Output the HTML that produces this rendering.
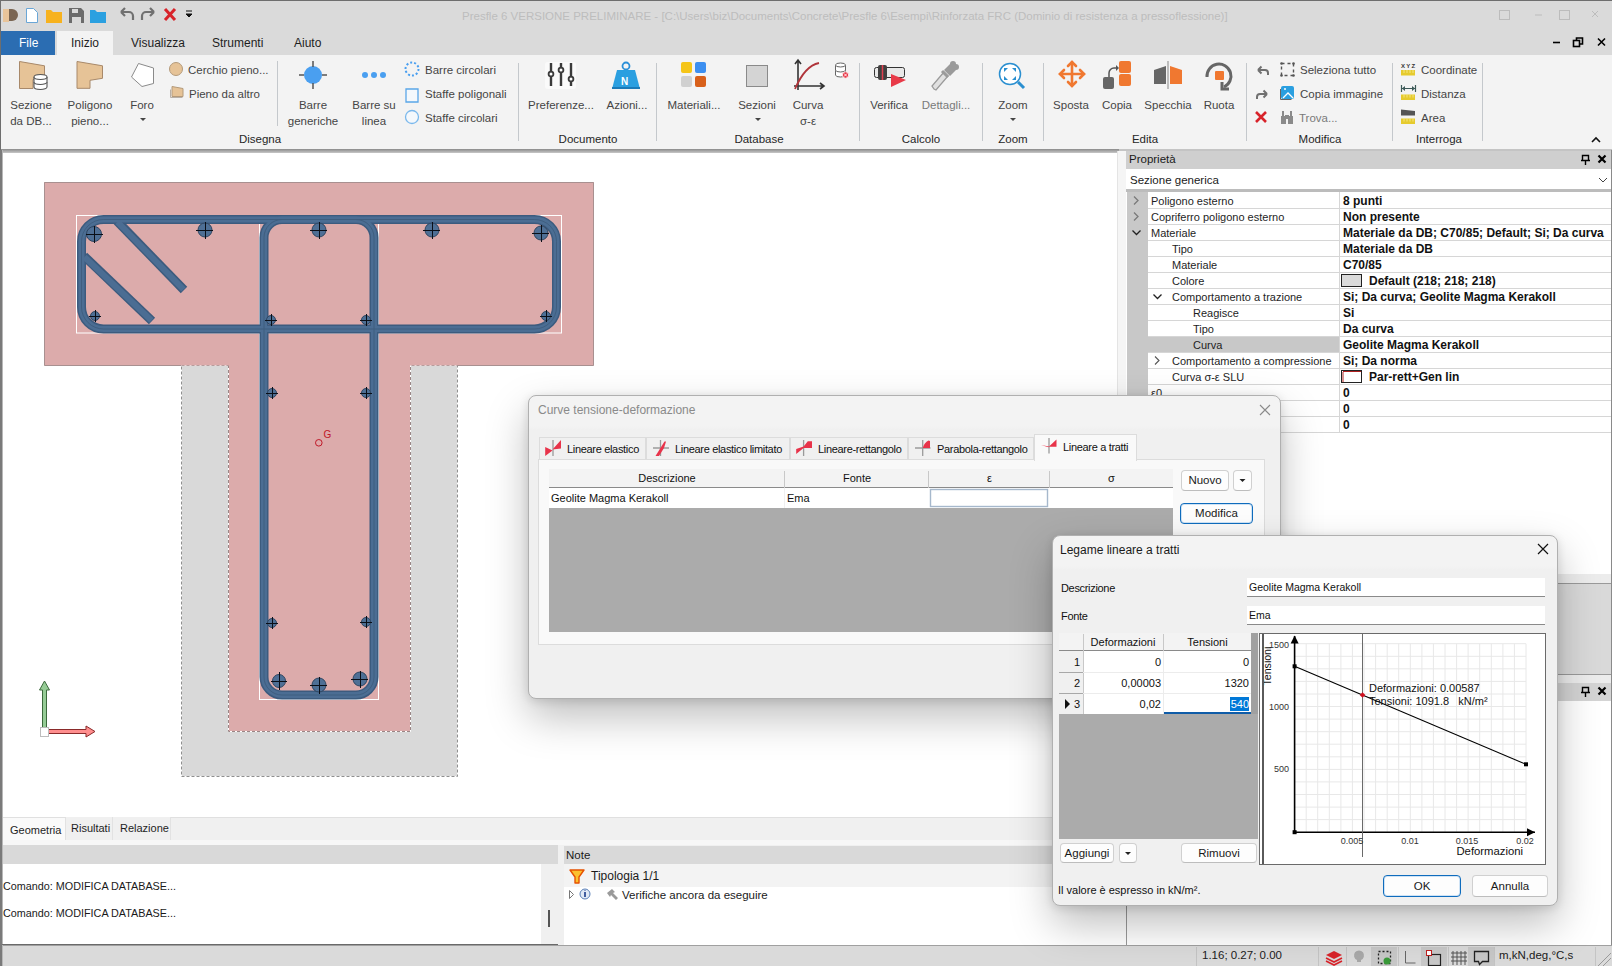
<!DOCTYPE html>
<html><head><meta charset="utf-8">
<style>
*{box-sizing:border-box}
html,body{margin:0;padding:0}
body{width:1612px;height:966px;position:relative;overflow:hidden;background:#dadada;font-family:"Liberation Sans",sans-serif;font-size:11px;color:#1e1e1e}
.a{position:absolute}
.t{position:absolute;white-space:nowrap;line-height:14px}
.b{font-weight:bold}
svg{position:absolute;overflow:visible}
</style></head><body>

<!-- ============ TITLE BAR ============ -->
<div class="a" style="left:0;top:0;width:1612px;height:31px;background:#dadada;border-top:1px solid #6e6e6e;border-left:1px solid #6e6e6e"></div>
<div class="t" style="left:462px;top:9px;color:#bdbdbd;font-size:11.5px">Presfle 6 VERSIONE PRELIMINARE - [C:\Users\biz\Documents\Concrete\Presfle 6\Esempi\Rinforzata FRC (Dominio di resistenza a pressoflessione)]</div>

<!-- ============ TAB STRIP ============ -->
<div class="a" style="left:1px;top:31px;width:54px;height:24px;background:#2b6db2"></div>
<div class="t" style="left:19px;top:36px;color:#fff;font-size:12px">File</div>
<div class="a" style="left:57px;top:31px;width:56px;height:24px;background:#f3f3f3"></div>
<div class="t" style="left:71px;top:36px;font-size:12px">Inizio</div>
<div class="t" style="left:131px;top:36px;font-size:12px">Visualizza</div>
<div class="t" style="left:212px;top:36px;font-size:12px">Strumenti</div>
<div class="t" style="left:294px;top:36px;font-size:12px">Aiuto</div>

<!-- ============ RIBBON BODY ============ -->
<div class="a" style="left:1px;top:55px;width:1611px;height:94px;background:#f3f3f3"></div>
<div class="a" style="left:0;top:149px;width:1612px;height:2px;background:#c4c4c4"></div>
<div class="a" style="left:0;top:149px;width:1119px;height:4px;background:linear-gradient(#8a8a8a,#a8a8a8 50%,#c8c8c8)"></div>
<style>
.lb{position:absolute;width:100px;text-align:center;white-space:nowrap;line-height:16px;color:#454545;font-size:11.5px}
.gl{position:absolute;width:120px;text-align:center;white-space:nowrap;line-height:14px;color:#262626;font-size:11.5px}
.sm{position:absolute;white-space:nowrap;line-height:14px;color:#454545;font-size:11.5px}
.sep{position:absolute;top:63px;width:1px;height:78px;background:#c4c8cc}
</style>
<!-- large button labels (top = baseline-12) -->
<div class="lb" style="left:-19px;top:97px">Sezione<br>da DB...</div>
<div class="lb" style="left:40px;top:97px">Poligono<br>pieno...</div>
<div class="lb" style="left:92px;top:97px">Foro</div>
<div class="lb" style="left:263px;top:97px">Barre<br>generiche</div>
<div class="lb" style="left:324px;top:97px">Barre su<br>linea</div>
<div class="lb" style="left:511px;top:97px">Preferenze...</div>
<div class="lb" style="left:577px;top:97px">Azioni...</div>
<div class="lb" style="left:644px;top:97px">Materiali...</div>
<div class="lb" style="left:707px;top:97px">Sezioni</div>
<div class="lb" style="left:758px;top:97px">Curva<br>σ-ε</div>
<div class="lb" style="left:839px;top:97px">Verifica</div>
<div class="lb" style="left:896px;top:97px;color:#7a7a7a">Dettagli...</div>
<div class="lb" style="left:963px;top:97px">Zoom</div>
<div class="lb" style="left:1021px;top:97px">Sposta</div>
<div class="lb" style="left:1067px;top:97px">Copia</div>
<div class="lb" style="left:1118px;top:97px">Specchia</div>
<div class="lb" style="left:1169px;top:97px">Ruota</div>
<!-- small buttons -->
<div class="sm" style="left:188px;top:63px">Cerchio pieno...</div>
<div class="sm" style="left:189px;top:87px">Pieno da altro</div>
<div class="sm" style="left:425px;top:63px">Barre circolari</div>
<div class="sm" style="left:425px;top:87px">Staffe poligonali</div>
<div class="sm" style="left:425px;top:111px">Staffe circolari</div>
<div class="sm" style="left:1300px;top:63px">Seleziona tutto</div>
<div class="sm" style="left:1300px;top:87px">Copia immagine</div>
<div class="sm" style="left:1299px;top:111px;color:#7a7a7a">Trova...</div>
<div class="sm" style="left:1421px;top:63px">Coordinate</div>
<div class="sm" style="left:1421px;top:87px">Distanza</div>
<div class="sm" style="left:1421px;top:111px">Area</div>
<!-- group labels -->
<div class="gl" style="left:200px;top:132px">Disegna</div>
<div class="gl" style="left:528px;top:132px">Documento</div>
<div class="gl" style="left:699px;top:132px">Database</div>
<div class="gl" style="left:861px;top:132px">Calcolo</div>
<div class="gl" style="left:953px;top:132px">Zoom</div>
<div class="gl" style="left:1085px;top:132px">Edita</div>
<div class="gl" style="left:1260px;top:132px">Modifica</div>
<div class="gl" style="left:1379px;top:132px">Interroga</div>
<!-- separators -->
<div class="sep" style="left:277px;top:61px;height:65px"></div>
<div class="sep" style="left:518px"></div>
<div class="sep" style="left:656px"></div>
<div class="sep" style="left:859px"></div>
<div class="sep" style="left:982px"></div>
<div class="sep" style="left:1043px"></div>
<div class="sep" style="left:1246px"></div>
<div class="sep" style="left:1392px"></div>
<div class="sep" style="left:1482px"></div>

<!-- ribbon icons -->
<svg width="1612" height="150" style="left:0;top:0">
 <!-- QAT -->
 <path d="M3 9h6v13h-6z" fill="#e8c49a"/><path d="M9 9h3a6 6 0 0 1 0 12h-3z" fill="#7a6552"/>
 <path d="M26.5 8.5h7l4 4v10h-11z" fill="#fff" stroke="#6aa6d6"/>
 <path d="M46 10h5l2 2h9v11h-16z" fill="#f7b21e"/>
 <path d="M69 8h12l3 3v12h-3v-6h-9v6h-3z" fill="#6b6b6b"/><rect x="72" y="9" width="6" height="4" fill="#dadada"/>
 <path d="M90 10h5l2 2h9v11h-16z" fill="#2ba0e0"/>
 <path d="M121 12l4-4M121 12l4 4M121 12h8a4 4 0 0 1 4 4v4" fill="none" stroke="#707070" stroke-width="2.2"/>
 <path d="M154 12l-4-4M154 12l-4 4M154 12h-8a4 4 0 0 0-4 4v4" fill="none" stroke="#707070" stroke-width="2.2"/>
 <path d="M165 9l10 11M175 9l-10 11" stroke="#d8232a" stroke-width="3"/>
 <path d="M186 11h6M186 14h6l-3 3z" fill="#111" stroke="#111" stroke-width="1"/>
 <!-- window controls title -->
 <g stroke="#bcbcbc" fill="none"><rect x="1499.5" y="10.5" width="10" height="9"/><path d="M1535 15h7"/><rect x="1559.5" y="10.5" width="10" height="9"/><path d="M1592 11l6 6M1598 11l-6 6"/></g>
 <g stroke="#000" stroke-width="1.6" fill="none"><path d="M1553 42.5h7"/><rect x="1573.5" y="40.5" width="6" height="6"/><path d="M1576.5 40.5v-2.5h6v6h-3"/><path d="M1598 38.5l7 7M1605 38.5l-7 7"/></g>
 <!-- Sezione da DB -->
 <path d="M19.5 61.5l25 4.3v12.5l-11.5 1.2v9h-13.5z" fill="#e6c397" stroke="#a8896a"/>
 <g fill="#fff" stroke="#555" stroke-width="1.1"><path d="M34 77v10a6.5 2.5 0 0 0 13 0v-10"/><ellipse cx="40.5" cy="77" rx="6.5" ry="2.5"/><path d="M34 82a6.5 2.5 0 0 0 13 0"/></g>
 <!-- Poligono pieno -->
 <path d="M77 61.5l25.5 4.3v12.5l-12.5 2v8h-13z" fill="#e6c397" stroke="#a8896a"/>
 <!-- Foro -->
 <path d="M138.5 63.5l15 4.5v15.5l-11.5 3-10.5-9.5z" fill="#fff" stroke="#8a8a8a"/>
 <path d="M140 118l3 3 3-3z" fill="#444"/>
 <!-- small draw icons -->
 <circle cx="176" cy="69" r="6.5" fill="#e6c397" stroke="#b49a7a"/>
 <path d="M170.5 89.5v8h12" fill="none" stroke="#b8b0a8"/><path d="M172 86.5l11 2v8h-11z" fill="#e6c397" stroke="#b49a7a"/>
 <!-- Barre generiche -->
 <circle cx="313" cy="75" r="9" fill="#4a9ff0"/><path d="M313 61v6M313 83v6M299 75h5M322 75h5" stroke="#555" stroke-width="1.5"/>
 <!-- Barre su linea -->
 <circle cx="365" cy="75" r="3" fill="#4a9ff0"/><circle cx="374" cy="75" r="3" fill="#4a9ff0"/><circle cx="383" cy="75" r="3" fill="#4a9ff0"/>
 <!-- barre circolari etc -->
 <circle cx="412" cy="69" r="6.5" fill="none" stroke="#4a9ff0" stroke-width="2" stroke-dasharray="2 2"/>
 <path d="M406 89h12v13h-12z" fill="#f4f8fc" stroke="#5aa6e8" stroke-width="1.3"/>
 <circle cx="412" cy="117" r="6.5" fill="#f4f8fc" stroke="#7ab8ec" stroke-width="1.3"/>
 <!-- Preferenze -->
 <rect x="545" y="62" width="31" height="27" rx="3" fill="#fafafa"/>
 <g stroke="#3b3b3b" stroke-width="2.4"><path d="M551 63v23M561 63v23M571 63v23"/></g>
 <g fill="#fff" stroke="#3b3b3b" stroke-width="1.8"><circle cx="551" cy="74" r="2.4"/><circle cx="561" cy="70" r="2.4"/><circle cx="571" cy="79" r="2.4"/></g>
 <!-- Azioni -->
 <circle cx="626" cy="66" r="3.5" fill="none" stroke="#2a8fd8" stroke-width="1.8"/>
 <path d="M617 70h18l5 19h-28z" fill="#2a9fe0"/><path d="M612 87h28v2h-28z" fill="#1a7ab8"/>
 <text x="621" y="85" font-size="10" font-weight="bold" fill="#fff" font-family="Liberation Sans">N</text>
 <!-- Materiali -->
 <rect x="681" y="62" width="11" height="11" rx="2" fill="#f5c518"/><rect x="695" y="62" width="11" height="11" rx="2" fill="#3c8ff0"/>
 <rect x="681" y="76" width="11" height="11" rx="2" fill="#d0d0d0"/><rect x="695" y="76" width="11" height="11" rx="2" fill="#d8601a"/>
 <!-- Sezioni -->
 <rect x="746.5" y="65.5" width="21" height="21" fill="#d4d4d4" stroke="#8a8a8a"/>
 <path d="M755 118l3 3 3-3z" fill="#444"/>
 <!-- Curva -->
 <path d="M798 90V61M795 64l3-4 3 4M794 86h29M820 83l4 3-4 3" fill="none" stroke="#333" stroke-width="1.6"/>
 <path d="M795 89c6-14 14-24 24-26" fill="none" stroke="#b0343a" stroke-width="1.8"/>
 <g fill="#fff" stroke="#666" stroke-width="1"><path d="M835.5 65v10a5 2 0 0 0 10 0v-10"/><ellipse cx="840.5" cy="65" rx="5" ry="2"/><path d="M835.5 70a5 2 0 0 0 10 0"/></g><circle cx="845.5" cy="75" r="3.2" fill="#e83a4a" stroke="#fff" stroke-width=".8"/><path d="M844 73.5l3 3M847 73.5l-3 3" stroke="#fff" stroke-width=".9"/>
 <!-- Verifica -->
 <rect x="874.5" y="67.5" width="30" height="10" rx="2" fill="#e8e8e8" stroke="#333"/><rect x="878" y="65" width="9" height="15" rx="2" fill="#404040"/><path d="M882.5 65v15" stroke="#e04050" stroke-width="1.5"/>
 <path d="M891 74l15 6-15 7z" fill="#e83a48"/>
 <!-- Dettagli -->
 <path d="M934 89l-2-3 12-14 4 4-12 14z" fill="#e0e0e0" stroke="#9a9a9a" stroke-width="1.3"/>
 <path d="M944 70l6-6a3 3 0 0 1 6 0a3 3 0 0 1 0 6l-6 6z" fill="#9a9a9a"/><path d="M942 71l6 6" stroke="#9a9a9a" stroke-width="3"/>
 <!-- Zoom -->
 <circle cx="1010" cy="74" r="10.5" fill="#fff" stroke="#2a8fd0" stroke-width="1.5"/><path d="M1018 82l6 6" stroke="#2a8fd0" stroke-width="3"/>
 <g fill="#2a8fd0"><path d="M1004 68h4l-4 4z"/><path d="M1016 68h-4l4 4z"/><path d="M1004 80h4l-4-4z"/><path d="M1016 80h-4l4-4z"/></g>
 <path d="M1010 118l3 3 3-3z" fill="#444"/>
 <!-- Sposta -->
 <g stroke="#f07830" stroke-width="2.6" fill="none" stroke-linecap="round"><path d="M1072 62v24M1060 74h24"/><path d="M1068 66l4-4 4 4M1068 82l4 4 4-4M1064 70l-4 4 4 4M1080 70l4 4-4 4"/></g>
 <!-- Copia -->
 <rect x="1103" y="77" width="11" height="12" rx="2" fill="#666"/><rect x="1119" y="61" width="12" height="12" rx="2" fill="#f07830"/><rect x="1119" y="74" width="12" height="12" rx="2" fill="#f07830"/>
 <path d="M1109 77v-4a5 5 0 0 1 5-5h3" fill="none" stroke="#555" stroke-width="1.5"/><path d="M1116 65l3 3-3 3z" fill="#555"/>
 <!-- Specchia -->
 <path d="M1154 70l12-4v18h-12z" fill="#666"/><path d="M1170 66l12 4v14h-12z" fill="#f07830"/><path d="M1168 61v28" stroke="#999" stroke-width="1.2"/>
 <!-- Ruota -->
 <path d="M1207 77a12 12 0 1 1 17 10" fill="none" stroke="#666" stroke-width="3"/><path d="M1222 82l0 7h7" fill="none" stroke="#666" stroke-width="3"/>
 <rect x="1215" y="71" width="9" height="9" rx="1" fill="#f07830"/>
 <!-- Modifica group small icons -->
 <path d="M1258 70l3.5-3.5M1258 70l3.5 3.5M1258 70h7a3 3 0 0 1 3 3v2" fill="none" stroke="#707070" stroke-width="2"/>
 <path d="M1267 94l-3.5-3.5M1267 94l-3.5 3.5M1267 94h-7a3 3 0 0 0-3 3v2" fill="none" stroke="#707070" stroke-width="2"/>
 <path d="M1256 112l10 10M1266 112l-10 10" stroke="#d8232a" stroke-width="2.6"/>
 <rect x="1281.5" y="63.5" width="12" height="12" fill="none" stroke="#555" stroke-width="1.4" stroke-dasharray="3 3"/><g fill="#555"><circle cx="1281.5" cy="63.5" r="1.3"/><circle cx="1293.5" cy="63.5" r="1.3"/><circle cx="1281.5" cy="75.5" r="1.3"/><circle cx="1293.5" cy="75.5" r="1.3"/></g>
 <path d="M1280.5 89v10.5h11" fill="none" stroke="#666" stroke-width="1"/><rect x="1281" y="86" width="13" height="13" rx="2" fill="#2a9fe0"/><path d="M1283 98l5-5 5 5" fill="none" stroke="#fff" stroke-width="1.3"/><circle cx="1285" cy="89" r="1" fill="#fff"/>
 <path d="M1281 116h5v8h-5zM1288 116h5v8h-5zM1282 111h2v5h-2zM1290 111h2v5h-2zM1285 115h4v4h-4z" fill="#8a8a8a"/>
 <!-- Interroga -->
 <g fill="#e6cb2e"><rect x="1401" y="70" width="14" height="5.5"/><rect x="1401" y="94.5" width="14" height="5.5"/><rect x="1401" y="118.5" width="14" height="5.5"/></g>
 <g stroke="#f7ec9a" stroke-width=".8"><path d="M1404 70v3M1407 70v3M1410 70v3M1413 70v3M1404 94.5v3M1407 94.5v3M1410 94.5v3M1413 94.5v3M1404 118.5v3M1407 118.5v3M1410 118.5v3M1413 118.5v3"/></g>
 <text x="1401" y="67.5" font-size="6" font-weight="bold" fill="#333" font-family="Liberation Sans" letter-spacing="1.2">XYZ</text>
 <path d="M1402 88.5h13M1401.5 85v7M1415.5 85v7" stroke="#3d5a58" stroke-width="1.2" fill="none"/><path d="M1402 88.5l3-2.5v5zM1415 88.5l-3-2.5v5z" fill="#3d5a58"/>
 <path d="M1401 109.5l14 1.5v4.5h-14z" fill="#555"/>
 <path d="M1592 142l4-4 4 4" fill="none" stroke="#111" stroke-width="1.6"/>
</svg>

<!-- ============ CANVAS ============ -->

<div class="a" style="left:2px;top:153px;width:1116px;height:664px;background:#fff;border-left:1px solid #d0d0d0"></div>

<svg width="1120" height="820" style="left:0;top:0">
 <defs>
  <g id="st">
  </g>
 </defs>
 <!-- gray web cover -->
 <rect x="181.5" y="365.5" width="276" height="411" fill="#d9d9d9"/>
 <rect x="181.5" y="365.5" width="276" height="411" fill="none" stroke="#fff"/>
 <rect x="181.5" y="365.5" width="276" height="411" fill="none" stroke="#8f8f8f" stroke-dasharray="3 2"/>
 <!-- pink web -->
 <rect x="228" y="365" width="182.5" height="366" fill="#dcabab"/>
 <path d="M228.5 365v366.5h182V365" fill="none" stroke="#fff"/>
 <path d="M228.5 365v366.5h182V365" fill="none" stroke="#9a8686" stroke-dasharray="3 2"/>
 <!-- pink flange -->
 <rect x="44" y="182" width="550" height="183.5" fill="#dcabab"/>
 <path d="M181 365.5H44.5V182.5h549v183H457" fill="none" stroke="#a89090"/>
 <!-- bounding boxes -->
 <rect x="76.5" y="215.5" width="485" height="117.5" fill="none" stroke="#fff"/>
 <rect x="259.5" y="215.5" width="119" height="484" fill="none" stroke="#fff"/>
 <!-- stirrups -->
 <g fill="none" stroke-linejoin="round" stroke-linecap="butt">
  <g stroke="#3c5b7e" stroke-width="9">
   <rect x="81.5" y="219.5" width="475" height="109.5" rx="22"/>
   <rect x="264" y="219.5" width="110" height="475.5" rx="18"/>
   <line x1="117" y1="221" x2="184" y2="290"/>
   <line x1="84" y1="256" x2="152" y2="321"/>
  </g>
  <g stroke="#4b6d93" stroke-width="6">
   <rect x="81.5" y="219.5" width="475" height="109.5" rx="22"/>
   <rect x="264" y="219.5" width="110" height="475.5" rx="18"/>
   <line x1="117.5" y1="222" x2="183.5" y2="289.5"/>
   <line x1="84.5" y1="257" x2="151.5" y2="320.5"/>
  </g>
  <g stroke="#3a5877" stroke-width="1" opacity=".7">
   <rect x="81.5" y="219.5" width="475" height="109.5" rx="22"/>
   <rect x="264" y="219.5" width="110" height="475.5" rx="18"/>
  </g>
 </g>
 <!-- bars -->
 <g fill="#4e6f95" stroke="#2e4560" stroke-width="1">
  <circle cx="94" cy="234" r="7.5"/><circle cx="205" cy="230" r="7"/><circle cx="319" cy="230" r="7"/><circle cx="432" cy="230" r="7"/><circle cx="541" cy="233" r="7"/>
  <circle cx="95" cy="316" r="4.5"/><circle cx="271" cy="320" r="4.5"/><circle cx="366" cy="320" r="4.5"/><circle cx="546" cy="316" r="4.5"/>
  <circle cx="272" cy="393" r="4.5"/><circle cx="366" cy="393" r="4.5"/><circle cx="272" cy="623" r="4.5"/><circle cx="366" cy="622" r="4.5"/>
  <circle cx="279" cy="681" r="6.5"/><circle cx="319" cy="685" r="7"/><circle cx="360" cy="679" r="7"/>
 </g>
 <g stroke="#0a0f18" stroke-width="1">
  <path d="M86 234.5h17M94.5 226v17"/>
  <path d="M196 230.5h17M205.5 222v17"/>
  <path d="M310 230.5h17M319.5 222v17"/>
  <path d="M423 230.5h17M432.5 222v17"/>
  <path d="M532 233.5h17M541.5 225v17"/>
  <path d="M89 316.5h12M95.5 310v12"/><path d="M265 320.5h12M271.5 314v12"/><path d="M360 320.5h12M366.5 314v12"/><path d="M540 316.5h12M546.5 310v12"/>
  <path d="M266 393.5h12M272.5 387v12"/><path d="M360 393.5h12M366.5 387v12"/><path d="M266 623.5h12M272.5 617v12"/><path d="M360 622.5h12M366.5 616v12"/>
  <path d="M271 681.5h16M279.5 672v18"/><path d="M310 685.5h17M319.5 677v17"/><path d="M351 679.5h17M360.5 671v17"/>
 </g>
 <!-- G marker -->
 <circle cx="318.8" cy="442.8" r="3.3" fill="none" stroke="#c01828" stroke-width="1"/>
 <text x="323.5" y="438" font-family="Liberation Sans" font-size="10" fill="#c01828">G</text>
 <!-- axes -->
 <path d="M42.5 728 V690 H39.5 L44.5 681 L49.5 690 H46.5 V728 Z" fill="#96cc96" stroke="#3c6a3c" stroke-width="1"/>
 <path d="M48 729.5 H86 V726 L95 731.5 L86 737 V733.5 H48 Z" fill="#ff8e8e" stroke="#8a2a2a" stroke-width="1"/>
 <rect x="40.5" y="727.5" width="8" height="9" fill="#fff" stroke="#bdbdbd"/>
</svg>

<!-- ============ BOTTOM TABS / COMMAND ============ -->
<div class="a" style="left:2px;top:817px;width:1116px;height:23px;background:#f0f0f0;border-top:1px solid #e0e0e0"></div>
<div class="a" style="left:0;top:840px;width:1126px;height:5px;background:#f7f7f7"></div>
<div class="a" style="left:2px;top:845px;width:556px;height:19px;background:#d9d9d9"></div>
<div class="a" style="left:2px;top:864px;width:540px;height:81px;background:#fff"></div>
<div class="a" style="left:541px;top:864px;width:17px;height:81px;background:#f0f0f0"></div>

<div class="a" style="left:3px;top:818px;width:63px;height:22px;background:#fafafa;border-right:1px solid #e2e2e2"></div>
<div class="a" style="left:66px;top:817px;width:47px;height:23px;background:#f0f0f0;border-right:1px solid #e2e2e2"></div>
<div class="a" style="left:113px;top:817px;width:58px;height:23px;background:#f0f0f0;border-right:1px solid #e2e2e2"></div>
<div class="t" style="left:10px;top:823px;font-size:11px">Geometria</div>
<div class="t" style="left:71px;top:821px;font-size:11px">Risultati</div>
<div class="t" style="left:120px;top:821px;font-size:11px">Relazione</div>
<div class="t" style="left:3px;top:879px;font-size:10.8px;color:#1a1a1a">Comando: MODIFICA DATABASE...</div>
<div class="t" style="left:3px;top:906px;font-size:10.8px;color:#1a1a1a">Comando: MODIFICA DATABASE...</div>
<div class="a" style="left:548px;top:910px;width:2px;height:17px;background:#555"></div>

<!-- Notes -->
<div class="a" style="left:558px;top:845px;width:568px;height:100px;background:#f0f0f0"></div>
<div class="a" style="left:564px;top:846px;width:562px;height:18px;background:#d9d9d9"></div>
<div class="a" style="left:1117px;top:840px;width:9px;height:5px;background:#f7f7f7"></div>
<div class="a" style="left:564px;top:864px;width:562px;height:23px;background:#f3f3f3"></div>
<div class="a" style="left:564px;top:887px;width:562px;height:58px;background:#fff"></div>

<div class="t" style="left:566px;top:848px;font-size:11.5px;color:#1a1a1a">Note</div>
<div class="t" style="left:591px;top:869px;font-size:12px;color:#1a1a1a">Tipologia 1/1</div>
<div class="t" style="left:622px;top:888px;font-size:11.5px;color:#1a1a1a">Verifiche ancora da eseguire</div>
<svg width="1612" height="966" style="left:0;top:0">
 <path d="M570 870h14l-5 7v6h-4v-6z" fill="#fbc02d" stroke="#e65100" stroke-width="1.4" stroke-linejoin="round"/>
 <path d="M569.5 890.5v8l4-4z" fill="none" stroke="#777"/>
 <circle cx="585" cy="894" r="5" fill="#dfe8f5" stroke="#5a7fb8"/><path d="M585 892v5M585 890v.5" stroke="#1a3a8a" stroke-width="1.6"/>
 <path d="M607 893l5-4 3 3-2 1 5 5-2 2-5-5-1 2z" fill="#9a9a9a"/>
</svg>

<!-- ============ PROPERTIES PANEL ============ -->
<div class="a" style="left:1117px;top:151px;width:9px;height:689px;background:#f5f5f5;border-left:1px solid #e4e4e4"></div>
<div class="a" style="left:1126px;top:151px;width:486px;height:18px;background:#cfcfcf"></div>
<div class="a" style="left:1126px;top:169px;width:486px;height:22px;background:#fff;border-bottom:1px solid #c8c8c8"></div>
<div class="a" style="left:1126px;top:191px;width:486px;height:383px;background:#fff"></div>

<div class="t" style="left:1129px;top:152px;font-size:11.5px;color:#1a1a1a">Proprietà</div>
<div class="t" style="left:1130px;top:173px;font-size:11.5px;color:#1a1a1a">Sezione generica</div>
<svg width="1612" height="440" style="left:0;top:0">
 <path d="M1582.5 155.5h6v5h-6zM1581 160.5h9M1585.5 161v4" fill="none" stroke="#000" stroke-width="1.4"/>
 <path d="M1598.5 155.5l7 7M1605.5 155.5l-7 7" stroke="#000" stroke-width="2.2"/>
 <path d="M1599 178l4 4 4-4" fill="none" stroke="#444" stroke-width="1"/>
 <rect x="1126" y="189" width="486" height="3" fill="#bcbcbc"/>
 <rect x="1127" y="192" width="21" height="240" fill="#c8c8c8"/>
 <rect x="1148" y="336" width="191" height="16" fill="#c8c8c8"/>
 <g stroke="#d6d6d6" stroke-width="1">
  <path d="M1148 208.5h464M1148 224.5h464M1148 240.5h464M1148 256.5h464M1148 272.5h464M1148 288.5h464M1148 304.5h464M1148 320.5h464M1148 336.5h464M1148 352.5h464M1148 368.5h464M1148 384.5h464M1148 400.5h464M1148 416.5h464M1148 432.5h464"/>
  <path d="M1339.5 192v240"/>
 </g>
 <g fill="none" stroke="#7a7a7a" stroke-width="1.3">
  <path d="M1134 196.5l4 4-4 4M1134 212.5l4 4-4 4"/>
 </g>
 <g fill="none" stroke="#222" stroke-width="1.3">
  <path d="M1132.5 230.5l4 4 4-4M1153.5 294.5l4 4 4-4"/>
 </g>
 <path d="M1155 356.5l4 4-4 4" fill="none" stroke="#555" stroke-width="1.1"/>
 <rect x="1341.5" y="274.5" width="20" height="12" fill="#dadada" stroke="#222"/>
 <rect x="1341.5" y="370.5" width="20" height="12" fill="#fff" stroke="#222"/>
 <path d="M1343 372v10M1343 371.5h18" stroke="#b02020" stroke-width="1"/>
</svg>
<div style="position:absolute;left:0;top:0;font-size:11px;color:#1e1e1e">
 <div class="t" style="left:1151px;top:194px">Poligono esterno</div>
 <div class="t" style="left:1151px;top:210px">Copriferro poligono esterno</div>
 <div class="t" style="left:1151px;top:226px">Materiale</div>
 <div class="t" style="left:1172px;top:242px">Tipo</div>
 <div class="t" style="left:1172px;top:258px">Materiale</div>
 <div class="t" style="left:1172px;top:274px">Colore</div>
 <div class="t" style="left:1172px;top:290px">Comportamento a trazione</div>
 <div class="t" style="left:1193px;top:306px">Reagisce</div>
 <div class="t" style="left:1193px;top:322px">Tipo</div>
 <div class="t" style="left:1193px;top:338px">Curva</div>
 <div class="t" style="left:1172px;top:354px">Comportamento a compressione</div>
 <div class="t" style="left:1172px;top:370px">Curva σ-ε SLU</div>
 <div class="t" style="left:1151px;top:386px">ε0</div>
</div>
<div style="position:absolute;left:0;top:0;width:1611px;height:440px;overflow:hidden;font-size:12px;font-weight:bold;color:#111">
 <div class="t" style="left:1343px;top:194px">8 punti</div>
 <div class="t" style="left:1343px;top:210px">Non presente</div>
 <div class="t" style="left:1343px;top:226px">Materiale da DB; C70/85; Default; Si; Da curva</div>
 <div class="t" style="left:1343px;top:242px">Materiale da DB</div>
 <div class="t" style="left:1343px;top:258px">C70/85</div>
 <div class="t" style="left:1369px;top:274px">Default (218; 218; 218)</div>
 <div class="t" style="left:1343px;top:290px">Si; Da curva; Geolite Magma Kerakoll</div>
 <div class="t" style="left:1343px;top:306px">Si</div>
 <div class="t" style="left:1343px;top:322px">Da curva</div>
 <div class="t" style="left:1343px;top:338px">Geolite Magma Kerakoll</div>
 <div class="t" style="left:1343px;top:354px">Si; Da norma</div>
 <div class="t" style="left:1369px;top:370px">Par-rett+Gen lin</div>
 <div class="t" style="left:1343px;top:386px">0</div>
 <div class="t" style="left:1343px;top:402px">0</div>
 <div class="t" style="left:1343px;top:418px">0</div>
</div>

<!-- lower right panel -->
<div class="a" style="left:1126px;top:574px;width:486px;height:9px;background:#ececec"></div>
<div class="a" style="left:1126px;top:583px;width:486px;height:92px;background:#d9d9d9;border-top:1px solid #9a9a9a;border-bottom:1px solid #9a9a9a"></div>
<div class="a" style="left:1126px;top:675px;width:486px;height:8px;background:#ececec"></div>
<div class="a" style="left:1126px;top:683px;width:486px;height:18px;background:#d4d4d4"></div>
<div class="a" style="left:1126px;top:701px;width:486px;height:244px;background:#fff;border-left:1px solid #9a9a9a"></div>

<!-- ============ STATUS BAR ============ -->
<div class="a" style="left:0;top:945px;width:1612px;height:21px;background:#dadada;border-top:1px solid #a0a0a0"></div>
<svg width="1612" height="966" style="left:0;top:0">
 <g stroke="#c4c4c4"><path d="M1196.5 947v19M1318.5 947v19M1346.5 947v19M1372.5 947v19M1398.5 947v19M1424.5 947v19M1448.5 947v19M1470.5 947v19M1494.5 947v19M1595.5 947v19"/></g>
 <g fill="#c8c8c8"><rect x="1371" y="947" width="26" height="19"/><rect x="1421" y="947" width="26" height="19"/><rect x="1468" y="947" width="26" height="19"/></g>
 <path d="M1326 955l8-4 8 4-8 4z" fill="#d8232a"/><path d="M1326 958l8 4 8-4M1326 961l8 4 8-4" fill="none" stroke="#d8232a" stroke-width="1.6"/>
 <path d="M1357 962v-2a5 5 0 1 1 4 0v2z" fill="#a8a8a8"/>
 <rect x="1378.5" y="951.5" width="12" height="12" fill="none" stroke="#222" stroke-width="1.3" stroke-dasharray="2 2"/><circle cx="1387" cy="961" r="3.5" fill="#3a9a3a"/>
 <path d="M1405.5 951v12h10" fill="none" stroke="#666"/>
 <rect x="1428.5" y="954.5" width="12" height="11" fill="none" stroke="#222" stroke-width="1.2"/><rect x="1426.5" y="950.5" width="5" height="5" fill="#fff" stroke="#c02020"/>
 <path d="M1453 951v14M1457 951v14M1461 951v14M1465 951v14M1451 953h16M1451 957h16M1451 961h16" stroke="#555"/>
 <path d="M1474.5 951.5h14v10h-6l-3 3-1-3h-4z" fill="none" stroke="#222" stroke-width="1.3"/>
 <path d="M1598 966l13-13M1603 966l8-8" stroke="#999"/>
</svg>
<div class="t" style="left:1202px;top:948px;font-size:11.5px;color:#1a1a1a">1.16; 0.27; 0.00</div>
<div class="t" style="left:1499px;top:948px;font-size:11.5px;color:#1a1a1a">m,kN,deg,°C,s</div>
<!-- lower right panel header icons -->
<svg width="1612" height="966" style="left:0;top:0">
 <path d="M1582.5 687.5h6v5h-6zM1581 692.5h9M1585.5 693v4" fill="none" stroke="#000" stroke-width="1.4"/>
 <path d="M1598.5 687.5l7 7M1605.5 687.5l-7 7" stroke="#000" stroke-width="2.2"/>
 <path d="M1611.5 150v795" stroke="#8a8a8a"/>
</svg>

<style>
.dlg{position:absolute;background:#f0f0f0;border:1px solid #b0b0b0;border-radius:8px;background-image:linear-gradient(#f3f3f3 0,#f3f3f3 30px,#f0f0f0 34px);box-shadow:0 18px 42px rgba(0,0,0,.26),0 2px 10px rgba(0,0,0,.12);overflow:hidden}
.btn{position:absolute;background:#fdfdfd;border:1px solid #d0d0d0;border-bottom-color:#bdbdbd;border-radius:4px;text-align:center;font-size:11.5px;line-height:18px;color:#1a1a1a}
.btnp{border:1px solid #0f6cbd;box-shadow:inset 0 0 0 1px #cfe3f5}
.tab{position:absolute;top:437px;height:22px;background:#f0f0f0;border:1px solid #dcdcdc;border-bottom:none}
.ti{position:absolute;white-space:nowrap;font-size:11px;line-height:14px;color:#111}
.tt{letter-spacing:-0.32px}
</style>
<div class="a" style="left:0;top:0;width:1px;height:153px;background:#6e6e6e"></div>
<div class="a" style="left:0;top:150px;width:3px;height:816px;background:#7a7a7a;border-right:1px solid #b8b8b8"></div>
<div class="a" style="left:2px;top:944px;width:556px;height:1px;background:#6a6a6a"></div>
<!-- ============ DIALOG 1 ============ -->
<div class="dlg" style="left:528px;top:395px;width:753px;height:304px"></div>
<div class="t" style="left:538px;top:403px;font-size:12px;color:#8a8a8a">Curve tensione-deformazione</div>
<svg width="1612" height="966" style="left:0;top:0">
 <path d="M1260 405l10 10M1270 405l-10 10" stroke="#8a8a8a" stroke-width="1.1"/>
</svg>
<!-- tab page -->
<div class="a" style="left:538px;top:459px;width:727px;height:186px;background:#f9f9f9;border:1px solid #dcdcdc"></div>
<div class="tab" style="left:539px;width:107px"></div>
<div class="tab" style="left:646px;width:144px"></div>
<div class="tab" style="left:790px;width:118px"></div>
<div class="tab" style="left:908px;width:126px"></div>
<div class="a" style="left:1034px;top:434px;width:103px;height:27px;background:#f9f9f9;border:1px solid #dcdcdc;border-bottom:none"></div>
<div class="ti tt" style="left:567px;top:442px">Lineare elastico</div>
<div class="ti tt" style="left:675px;top:442px">Lineare elastico limitato</div>
<div class="ti tt" style="left:818px;top:442px">Lineare-rettangolo</div>
<div class="ti tt" style="left:937px;top:442px">Parabola-rettangolo</div>
<div class="ti tt" style="left:1063px;top:440px">Lineare a tratti</div>
<svg width="1612" height="966" style="left:0;top:0">
 <g stroke="#9a9a9a" stroke-width="1.3">
  <path d="M553 440v16"/><path d="M660.5 440v16M653 448h16"/><path d="M803.6 440v16"/><path d="M922.7 440v16M915 448h15.5"/><path d="M1049 438v15.5"/>
 </g>
 <g fill="#e8334a">
  <path d="M545.2 447l7.3 3.5-7.3 5.5zM552.5 449.5l8.5-9.5v8.5z"/>
  <path d="M655.5 456l9-14.5h1.5l-2 6.5-5 8z"/>
  <path d="M796.2 449l7.4-2.5 4.2-5.2h4.2v6.8h-8.4l-7.4 6z"/>
  <path d="M922.7 448q1.5-5.5 5.8-7.5l1.5 0.5v7z"/>
  <path d="M1041 445l8 1.5 7.5-7v7.2h-7.5l-0.5 0.5z"/>
 </g>
</svg>
<!-- grid 1 -->
<div class="a" style="left:549px;top:469px;width:624px;height:19px;background:#f3f3f3;border-bottom:1px solid #8a8a8a"></div>
<div class="a" style="left:549px;top:488px;width:624px;height:20px;background:#fff"></div>
<div class="a" style="left:549px;top:508px;width:624px;height:124px;background:#ababab"></div>
<svg width="1612" height="966" style="left:0;top:0">
 <path d="M784.5 471v17M928.5 471v17M1049.5 471v17" stroke="#c8c8c8"/>
 <path d="M784.5 488v20" stroke="#f0f0f0"/>
 <rect x="930.5" y="489.5" width="117" height="17" fill="#fff" stroke="#a6b8cc" stroke-width="1.4"/>
</svg>
<div class="ti" style="left:549px;top:471px;width:236px;text-align:center">Descrizione</div>
<div class="ti" style="left:785px;top:471px;width:144px;text-align:center">Fonte</div>
<div class="ti" style="left:929px;top:471px;width:121px;text-align:center">ε</div>
<div class="ti" style="left:1050px;top:471px;width:123px;text-align:center">σ</div>
<div class="ti" style="left:551px;top:491px">Geolite Magma Kerakoll</div>
<div class="ti" style="left:787px;top:491px">Ema</div>
<div class="btn" style="left:1181px;top:470px;width:48px;height:21px">Nuovo</div>
<div class="btn" style="left:1233px;top:470px;width:19px;height:21px"></div>
<svg width="1612" height="966" style="left:0;top:0"><path d="M1239.5 479h6l-3 3z" fill="#222"/></svg>
<div class="btn btnp" style="left:1180px;top:503px;width:73px;height:21px">Modifica</div>

<!-- ============ DIALOG 2 ============ -->
<div class="dlg" style="left:1052px;top:535px;width:506px;height:371px"></div>
<div class="t" style="left:1060px;top:543px;font-size:12px;color:#1a1a1a">Legame lineare a tratti</div>
<svg width="1612" height="966" style="left:0;top:0">
 <path d="M1538 544l10 10M1548 544l-10 10" stroke="#111" stroke-width="1.2"/>
</svg>
<div class="ti tt" style="left:1061px;top:581px">Descrizione</div>
<div class="ti tt" style="left:1061px;top:609px">Fonte</div>
<div class="a" style="left:1247px;top:578px;width:298px;height:19px;background:#fff;border-bottom:1px solid #8a8a8a"></div>
<div class="a" style="left:1247px;top:606px;width:298px;height:19px;background:#fff;border-bottom:1px solid #8a8a8a"></div>
<div class="ti" style="left:1249px;top:580px;font-size:10.5px">Geolite Magma Kerakoll</div>
<div class="ti" style="left:1249px;top:608px;font-size:10.5px">Ema</div>
<!-- grid 2 -->
<div class="a" style="left:1059px;top:633px;width:199px;height:206px;background:#ababab"></div>
<div class="a" style="left:1059px;top:633px;width:192px;height:18px;background:#f3f3f3;border-bottom:1px solid #8a8a8a"></div>
<div class="a" style="left:1059px;top:651px;width:24px;height:63px;background:#f0f0f0"></div>
<div class="a" style="left:1083px;top:651px;width:168px;height:63px;background:#fff"></div>
<svg width="1612" height="966" style="left:0;top:0">
 <path d="M1083.5 634v80M1163.5 634v17" stroke="#c8c8c8"/>
 <path d="M1163.5 651v63" stroke="#ececec"/>
 <path d="M1059 672.5h24M1059 693.5h24" stroke="#a8a8a8"/>
 <path d="M1083 672.5h168M1083 693.5h168" stroke="#ececec"/>
 <rect x="1251" y="633" width="7" height="81" fill="#a0a0a0"/>
 <path d="M1065 699v10l5-5z" fill="#111"/>
 <rect x="1230" y="697" width="19" height="14" fill="#0078d7"/>
 <path d="M1164 713h87" stroke="#0f5ca8" stroke-width="2"/>
</svg>
<div class="ti" style="left:1083px;top:635px;width:80px;text-align:center">Deformazioni</div>
<div class="ti" style="left:1164px;top:635px;width:87px;text-align:center">Tensioni</div>
<div class="ti" style="left:1059px;top:655px;width:21px;text-align:right">1</div>
<div class="ti" style="left:1059px;top:676px;width:21px;text-align:right">2</div>
<div class="ti" style="left:1059px;top:697px;width:21px;text-align:right">3</div>
<div class="ti" style="left:1083px;top:655px;width:78px;text-align:right">0</div>
<div class="ti" style="left:1083px;top:676px;width:78px;text-align:right">0,00003</div>
<div class="ti" style="left:1083px;top:697px;width:78px;text-align:right">0,02</div>
<div class="ti" style="left:1164px;top:655px;width:85px;text-align:right">0</div>
<div class="ti" style="left:1164px;top:676px;width:85px;text-align:right">1320</div>
<div class="ti" style="left:1164px;top:697px;width:85px;text-align:right;color:#fff">540</div>
<div class="btn" style="left:1060px;top:843px;width:54px;height:20px">Aggiungi</div>
<div class="btn" style="left:1119px;top:843px;width:18px;height:20px"></div>
<svg width="1612" height="966" style="left:0;top:0"><path d="M1125 852h6l-3 3z" fill="#222"/></svg>
<div class="btn" style="left:1181px;top:843px;width:76px;height:20px">Rimuovi</div>
<div class="ti" style="left:1058px;top:883px">Il valore è espresso in kN/m².</div>
<div class="btn btnp" style="left:1383px;top:875px;width:78px;height:22px;line-height:20px">OK</div>
<div class="btn" style="left:1472px;top:875px;width:76px;height:22px;line-height:20px">Annulla</div>

<!-- chart -->
<div class="a" style="left:1259px;top:633px;width:287px;height:232px;background:#fff;border:1px solid #6a6a6a;border-left:1px solid #707070"></div>
<div class="a" style="left:1262px;top:634px;width:2px;height:230px;background:#5a5a5a"></div>
<svg width="1612" height="966" style="left:0;top:0" id="chart">

 <path d="M1306.2 643.7V832M1317.7 643.7V832M1329.3 643.7V832M1340.9 643.7V832M1352.4 643.7V832M1364.0 643.7V832M1375.6 643.7V832M1387.2 643.7V832M1398.7 643.7V832M1410.3 643.7V832M1421.9 643.7V832M1433.4 643.7V832M1445.0 643.7V832M1456.6 643.7V832M1468.1 643.7V832M1479.7 643.7V832M1491.3 643.7V832M1502.9 643.7V832M1514.4 643.7V832M1526.0 643.7V832M1295 819.6H1526M1295 807.1H1526M1295 794.5H1526M1295 781.9H1526M1295 769.4H1526M1295 756.8H1526M1295 744.2H1526M1295 731.7H1526M1295 719.1H1526M1295 706.5H1526M1295 694.0H1526M1295 681.4H1526M1295 668.8H1526M1295 656.3H1526M1295 643.7H1526" stroke="#e8e8e8" stroke-width="1" fill="none"/>
 <path d="M1294.6 636V832.2H1535" fill="none" stroke="#000" stroke-width="1.6"/>
 <path d="M1294.6 635.5l-4 8h8z" fill="#000"/>
 <path d="M1535 832.2l-8-4v8z" fill="#000"/>
 <path d="M1294.6 666.3L1526.0 764.3" stroke="#000" stroke-width="1.1" fill="none"/>
 <rect x="1292.6" y="830.2" width="4" height="4" fill="#000"/>
 <rect x="1292.6" y="664.3" width="4" height="4" fill="#000"/>
 <rect x="1524" y="762.3" width="4" height="4" fill="#000"/>
 <path d="M1362.5 634V857" stroke="#6a6a6a" stroke-width="1"/>
 <circle cx="1362.5" cy="832.2" r="0" fill="none"/>
 <rect x="1360.5" y="693" width="4" height="4" fill="#d01020" transform="rotate(45 1362.5 695)"/>
 <g font-family="Liberation Sans" font-size="9" fill="#333" text-anchor="end">
  <text x="1289" y="647.5">1500</text><text x="1289" y="709.5">1000</text><text x="1289" y="772">500</text>
 </g>
 <g font-family="Liberation Sans" font-size="9" fill="#333" text-anchor="middle">
  <text x="1352" y="844">0.005</text><text x="1410" y="844">0.01</text><text x="1467" y="844">0.015</text><text x="1525" y="844">0.02</text>
 </g>
 <text x="1523" y="855" font-family="Liberation Sans" font-size="11.3" fill="#111" text-anchor="end">Deformazioni</text>
 <text x="1369" y="691.5" font-family="Liberation Sans" font-size="11" fill="#111">Deformazioni: 0.00587</text>
 <text x="1369" y="704.5" font-family="Liberation Sans" font-size="11" fill="#111" xml:space="preserve">Tensioni: 1091.8   kN/m²</text>
 <clipPath id="tcl"><rect x="1264" y="634" width="40" height="100"/></clipPath>
 <g clip-path="url(#tcl)"><text transform="translate(1270.5 685.5) rotate(-90)" font-family="Liberation Sans" font-size="10.6" fill="#111">Tensioni</text></g>
</svg>

</body></html>
